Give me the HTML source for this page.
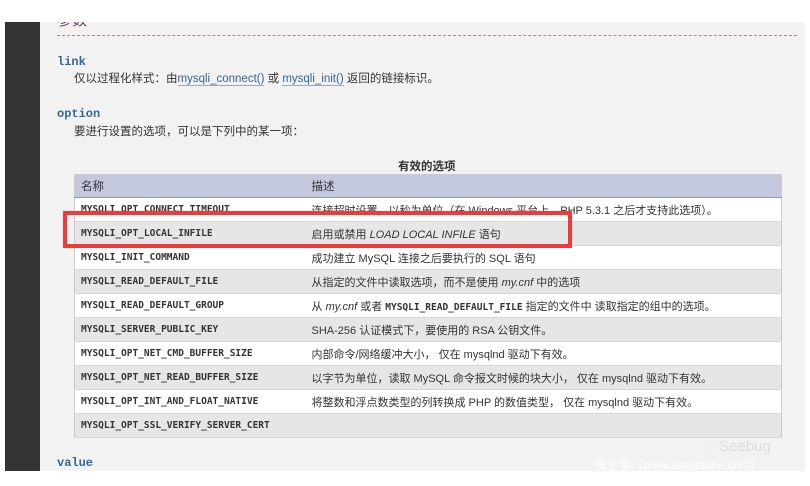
<!DOCTYPE html>
<html><head><meta charset="utf-8"><style>
*{margin:0;padding:0;box-sizing:border-box}
body{width:810px;height:486px;background:#fff;position:relative;overflow:hidden;font-family:"Liberation Sans","Noto Sans CJK SC",sans-serif;font-size:11px;color:#333}
.side{position:absolute;left:5px;top:22px;width:35px;height:449px;background:#333}
.main{position:absolute;left:40px;top:22px;width:765px;height:449px;background:#f2f2f2;overflow:hidden}
.h{position:absolute;left:17px;top:-13px;font-size:15px;color:#793862}
.dash{position:absolute;left:17px;top:13px;width:740px;border-top:1px dashed #a88}
.term{position:absolute;left:17px;font-family:"Liberation Mono","DejaVu Sans Mono",monospace;font-weight:bold;font-size:12px;color:#369}
.desc{position:absolute;left:34px;font-size:11.5px;color:#333}
.desc a{color:#369;text-decoration:none;border-bottom:1px solid #9ab}
.cap{position:absolute;left:358px;top:136px;font-weight:bold;font-size:11.5px;color:#333}
table{position:absolute;left:34px;top:152px;width:707px;border-collapse:collapse;border:1px solid #ccc;table-layout:fixed}
th{background:#c4c8dc;text-align:left;font-weight:normal;font-size:11.5px;height:23px;border-bottom:1px solid #8c91c0;padding-left:6px}
td{height:24px;padding-left:6px;font-size:11px;border-bottom:1px solid #d6d6d6;white-space:nowrap;overflow:hidden}
td:first-child{font-family:"DejaVu Sans Mono","Liberation Mono",monospace;font-weight:bold;font-size:9.5px}
tr:nth-child(odd) td{background:#fff}
tr:nth-child(even) td{background:#e6e6e6}
.red{position:absolute;left:63px;top:211px;width:509px;height:37px;border:4px solid #f03a3a}
.wm{position:absolute;left:595px;top:456px;color:#fff;font-size:12px;opacity:.9}
.sb{position:absolute;left:706px;top:438px;color:#ddd;font-size:15px}
</style></head><body>
<div class="side"></div>
<div class="main">
<div class="h">参数</div>
<div class="dash"></div>
<div class="term" style="top:33px">link</div>
<div class="desc" style="top:48px">仅以过程化样式：由<a>mysqli_connect()</a> 或 <a>mysqli_init()</a> 返回的链接标识。</div>
<div class="term" style="top:85px">option</div>
<div class="desc" style="top:101px">要进行设置的选项，可以是下列中的某一项：</div>
<div class="cap">有效的选项</div>
<table>
<colgroup><col style="width:231px"><col style="width:476px"></colgroup>
<thead><tr><th>名称</th><th>描述</th></tr></thead>
<tbody>
<tr><td>MYSQLI_OPT_CONNECT_TIMEOUT</td><td>连接超时设置，以秒为单位（在 Windows 平台上，PHP 5.3.1 之后才支持此选项）。</td></tr>
<tr><td>MYSQLI_OPT_LOCAL_INFILE</td><td>启用或禁用 <i>LOAD LOCAL INFILE</i> 语句</td></tr>
<tr><td>MYSQLI_INIT_COMMAND</td><td>成功建立 MySQL 连接之后要执行的 SQL 语句</td></tr>
<tr><td>MYSQLI_READ_DEFAULT_FILE</td><td>从指定的文件中读取选项，而不是使用 <i>my.cnf</i> 中的选项</td></tr>
<tr><td>MYSQLI_READ_DEFAULT_GROUP</td><td>从 <i>my.cnf</i> 或者 <b style="font-family:'DejaVu Sans Mono',monospace;font-size:9.5px">MYSQLI_READ_DEFAULT_FILE</b> 指定的文件中 读取指定的组中的选项。</td></tr>
<tr><td>MYSQLI_SERVER_PUBLIC_KEY</td><td>SHA-256 认证模式下，要使用的 RSA 公钥文件。</td></tr>
<tr><td>MYSQLI_OPT_NET_CMD_BUFFER_SIZE</td><td>内部命令/网络缓冲大小， 仅在 mysqlnd 驱动下有效。</td></tr>
<tr><td>MYSQLI_OPT_NET_READ_BUFFER_SIZE</td><td>以字节为单位，读取 MySQL 命令报文时候的块大小， 仅在 mysqlnd 驱动下有效。</td></tr>
<tr><td>MYSQLI_OPT_INT_AND_FLOAT_NATIVE</td><td>将整数和浮点数类型的列转换成 PHP 的数值类型， 仅在 mysqlnd 驱动下有效。</td></tr>
<tr><td>MYSQLI_OPT_SSL_VERIFY_SERVER_CERT</td><td></td></tr>
</tbody></table>
<div class="term" style="top:434px">value</div>
</div>
<div class="red"></div>
<div class="sb">◌ Seebug</div>
<div class="wm">安全客（www.anquanke.com）</div>
</body></html>
